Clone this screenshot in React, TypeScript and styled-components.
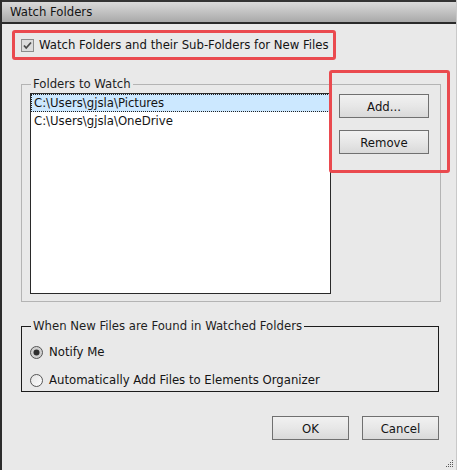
import React, { useState } from 'react'
import styled, { createGlobalStyle } from 'styled-components'

const GlobalStyle = createGlobalStyle`
  html, body {
    margin: 0;
    padding: 0;
    background: #e9e9e9;
  }
  * {
    box-sizing: border-box;
  }
`

const FONT = `'DejaVu Sans Condensed', 'DejaVu Sans', sans-serif`
const RED = '#ea4a4f'

const Window = styled.div`
  position: relative;
  width: 457px;
  height: 470px;
  display: flex;
  flex-direction: column;
  background: #e9e9e9;
  border-left: 2px solid #2c2c2c;
  border-right: 1px solid #c9c9c9;
  font-family: ${FONT};
  font-size: 13px;
  line-height: 16px;
  color: #141414;
`

const TitleBar = styled.div`
  height: 24px;
  display: flex;
  align-items: center;
  padding-left: 8px;
  border-top: 2px solid #333;
  border-bottom: 2px solid #2a2a2a;
  background: linear-gradient(#dadada, #a9a9a9);
  font-size: 13px;
`

const Body = styled.div`
  display: flex;
  flex-direction: column;
  padding: 6px 16px 0 19px;
`

const Highlight = styled.div`
  width: 324px;
  height: 30px;
  margin-left: -9px;
  display: flex;
  align-items: center;
  padding-left: 6px;
  border: 3px solid ${RED};
  border-radius: 3px;
`

const CheckLabel = styled.label`
  display: flex;
  align-items: center;
  gap: 5px;
`

const FoldersArea = styled.div`
  position: relative;
  margin-top: 17px;
`

const Group = styled.fieldset<{ $dark?: boolean }>`
  margin: 0;
  padding: 0;
  width: ${(p) => (p.$dark ? 418 : 420)}px;
  border: 1px solid ${(p) => (p.$dark ? '#1c1c1c' : '#b4b4b4')};
  min-width: 0;
`

const Legend = styled.legend`
  margin-left: 9px;
  padding: 0 2px;
  line-height: 14px;
  color: #1e1e1e;
`

const FoldersInner = styled.div`
  display: flex;
  gap: 8px;
  padding: 2px 11px 7px 8px;
`

const List = styled.div`
  width: 301px;
  height: 201px;
  background: #fff;
  border: 1px solid #2a2a2a;
  display: flex;
  flex-direction: column;
`

const ListRow = styled.div<{ $selected?: boolean }>`
  height: 18px;
  display: flex;
  align-items: center;
  padding-left: 2px;
  background: ${(p) => (p.$selected ? '#cce8ff' : 'transparent')};
  border: 1px dotted ${(p) => (p.$selected ? '#222' : 'transparent')};
`

const SideButtons = styled.div`
  display: flex;
  flex-direction: column;
  gap: 12px;
  padding-top: 1px;
`

const Button = styled.button<{ $w: number }>`
  width: ${(p) => p.$w}px;
  height: 24px;
  padding: 0;
  border: 1px solid #707070;
  border-radius: 0;
  background: linear-gradient(#f1f1f1 0%, #e7e7e7 50%, #d9d9d9 100%);
  font-family: ${FONT};
  font-size: 13px;
  color: #141414;
`

const Annotation = styled.div`
  position: absolute;
  left: 308px;
  top: -7px;
  width: 121px;
  height: 103px;
  border: 3px solid ${RED};
  border-radius: 3px;
  pointer-events: none;
`

const WhenArea = styled.div`
  margin-top: 17px;
`

const RadioList = styled.div`
  display: flex;
  flex-direction: column;
  gap: 10px;
  padding: 10px 0 2px 8px;
`

const RadioRow = styled.label`
  display: flex;
  align-items: center;
  gap: 6px;
  height: 18px;
`

const Footer = styled.div`
  display: flex;
  justify-content: flex-end;
  gap: 13px;
  margin-top: 24px;
  padding-right: 1px;
`

const Grip = styled.svg`
  position: absolute;
  right: 2px;
  bottom: 2px;
`

const CheckBox = () => (
  <svg width='13' height='13' viewBox='0 0 13 13'>
    <rect x='0.5' y='0.5' width='12' height='12' fill='#dcdcdc' stroke='#8c8c8c' />
    <path d='M3 6.5 L5.2 9 L10 3.5' fill='none' stroke='#4a4a4a' strokeWidth='1.8' />
  </svg>
)

const Radio = ({ checked }: { checked?: boolean }) => (
  <svg width='13' height='13' viewBox='0 0 13 13'>
    <defs>
      <linearGradient id='rg' x1='0' y1='0' x2='1' y2='1'>
        <stop offset='0' stopColor='#e2e2e2' />
        <stop offset='1' stopColor='#ffffff' />
      </linearGradient>
    </defs>
    <circle cx='6.5' cy='6.5' r='6' fill={checked ? '#d0d0d0' : 'url(#rg)'} stroke='#555' />
    {checked && <circle cx='6.5' cy='6.5' r='3' fill='#2e2e2e' />}
  </svg>
)

const folders = ['C:\\Users\\gjsla\\Pictures', 'C:\\Users\\gjsla\\OneDrive']

export default function App() {
  const [selected] = useState(0)
  return (
    <>
      <GlobalStyle />
      <Window>
        <TitleBar>Watch Folders</TitleBar>
        <Body>
          <Highlight>
            <CheckLabel>
              <CheckBox />
              Watch Folders and their Sub-Folders for New Files
            </CheckLabel>
          </Highlight>

          <FoldersArea>
            <Group>
              <Legend>Folders to Watch</Legend>
              <FoldersInner>
                <List>
                  {folders.map((f, i) => (
                    <ListRow key={f} $selected={i === selected}>
                      {f}
                    </ListRow>
                  ))}
                </List>
                <SideButtons>
                  <Button $w={90}>Add...</Button>
                  <Button $w={90}>Remove</Button>
                </SideButtons>
              </FoldersInner>
            </Group>
            <Annotation />
          </FoldersArea>

          <WhenArea>
            <Group $dark>
              <Legend>When New Files are Found in Watched Folders</Legend>
              <RadioList>
                <RadioRow>
                  <Radio checked />
                  Notify Me
                </RadioRow>
                <RadioRow>
                  <Radio />
                  Automatically Add Files to Elements Organizer
                </RadioRow>
              </RadioList>
            </Group>
          </WhenArea>

          <Footer>
            <Button $w={77}>OK</Button>
            <Button $w={77}>Cancel</Button>
          </Footer>
        </Body>
        <Grip width='10' height='10' viewBox='0 0 10 10'>
          {[
            [8, 2],
            [6, 4],
            [8, 4],
            [4, 6],
            [6, 6],
            [8, 6],
            [2, 8],
            [4, 8],
            [6, 8],
            [8, 8],
          ].map(([x, y]) => (
            <rect key={`${x}-${y}`} x={x} y={y} width='1' height='1' fill='#5a5a5a' />
          ))}
        </Grip>
      </Window>
    </>
  )
}
